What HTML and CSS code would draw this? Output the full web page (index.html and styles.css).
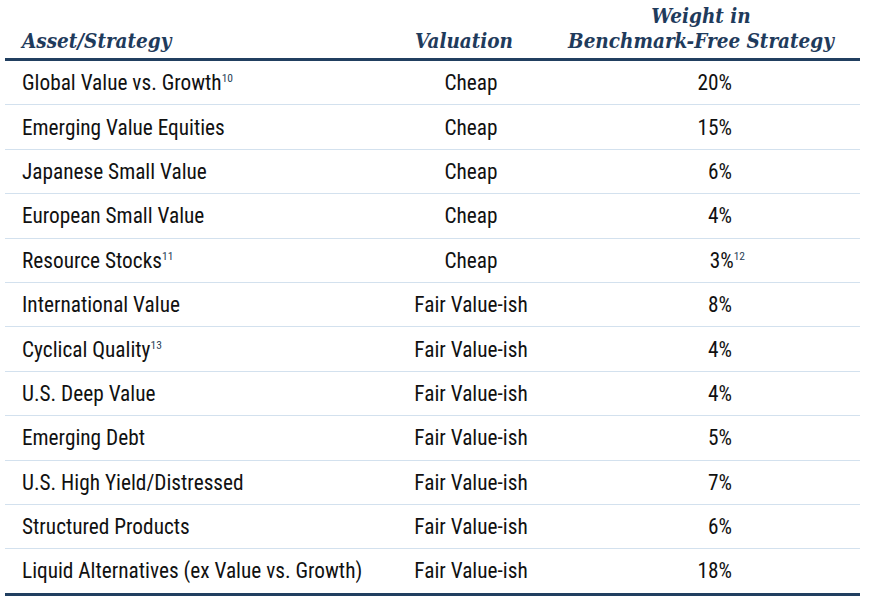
FILE: index.html
```html
<!DOCTYPE html>
<html>
<head>
<meta charset="utf-8">
<link rel="stylesheet" href="styles.css">
</head>
<body>
<table class="alloc">
  <colgroup>
    <col class="w-asset">
    <col class="w-val">
    <col class="w-wt">
  </colgroup>
  <thead>
    <tr>
      <th class="c-asset">Asset/Strategy</th>
      <th class="c-val">Valuation</th>
      <th class="c-wt">Weight in<br>Benchmark-Free Strategy</th>
    </tr>
  </thead>
  <tbody>
    <tr><td class="c-asset">Global Value vs. Growth<sup>10</sup></td><td class="c-val">Cheap</td><td class="c-wt">20%</td></tr>
    <tr><td class="c-asset">Emerging Value Equities</td><td class="c-val">Cheap</td><td class="c-wt">15%</td></tr>
    <tr><td class="c-asset">Japanese Small Value</td><td class="c-val">Cheap</td><td class="c-wt">6%</td></tr>
    <tr><td class="c-asset">European Small Value</td><td class="c-val">Cheap</td><td class="c-wt">4%</td></tr>
    <tr><td class="c-asset">Resource Stocks<sup>11</sup></td><td class="c-val">Cheap</td><td class="c-wt">3%<sup class="hang">12</sup></td></tr>
    <tr><td class="c-asset">International Value</td><td class="c-val">Fair Value-ish</td><td class="c-wt">8%</td></tr>
    <tr><td class="c-asset">Cyclical Quality<sup>13</sup></td><td class="c-val">Fair Value-ish</td><td class="c-wt">4%</td></tr>
    <tr><td class="c-asset">U.S. Deep Value</td><td class="c-val">Fair Value-ish</td><td class="c-wt">4%</td></tr>
    <tr><td class="c-asset">Emerging Debt</td><td class="c-val">Fair Value-ish</td><td class="c-wt">5%</td></tr>
    <tr><td class="c-asset">U.S. High Yield/Distressed</td><td class="c-val">Fair Value-ish</td><td class="c-wt">7%</td></tr>
    <tr><td class="c-asset">Structured Products</td><td class="c-val">Fair Value-ish</td><td class="c-wt">6%</td></tr>
    <tr><td class="c-asset">Liquid Alternatives (ex Value vs. Growth)</td><td class="c-val">Fair Value-ish</td><td class="c-wt">18%</td></tr>
  </tbody>
</table>
</body>
</html>
```

FILE: styles.css
```css
html, body {
  margin: 0;
  padding: 0;
  background: #ffffff;
}
body {
  padding: 0 13px 0 5px;
}
.alloc {
  width: 855px;
  table-layout: fixed;
  border-collapse: collapse;
  font-family: "Roboto Condensed", "Liberation Sans Narrow", Roboto, sans-serif;
  font-stretch: condensed;
  color: #111111;
}
.w-asset { width: 375px; }
.w-val { width: 182px; }
.w-wt { width: 298px; }
.alloc th,
.alloc td {
  white-space: nowrap;
  overflow: visible;
}
.alloc th {
  font-family: "DejaVu Serif", serif;
  font-style: italic;
  font-weight: bold;
  font-size: 20.5px;
  line-height: 25px;
  color: #1f3b5c;
  padding: 0 0 4px 0;
  vertical-align: bottom;
  height: 54px;
  border-bottom: 3px solid #213f60;
}
.alloc td {
  font-size: 21.3px;
  height: 43.4px;
  padding: 0;
  border-bottom: 1px solid #d3e1ee;
}
.alloc tbody tr:last-child td {
  border-bottom: 3px solid #213f60;
}
.c-asset {
  text-align: left;
  padding-left: 17px !important;
}
.c-val {
  text-align: center;
}
th.c-val {
  padding-right: 14px !important;
}
th.c-wt {
  text-align: center;
  padding-right: 20px !important;
}
td.c-wt {
  text-align: right;
  padding-right: 128px !important;
}
sup {
  font-size: 11.5px;
  line-height: 0;
  vertical-align: 8px;
  color: #2a3f58;
}
sup.hang {
  margin-right: -13px;
}
```
